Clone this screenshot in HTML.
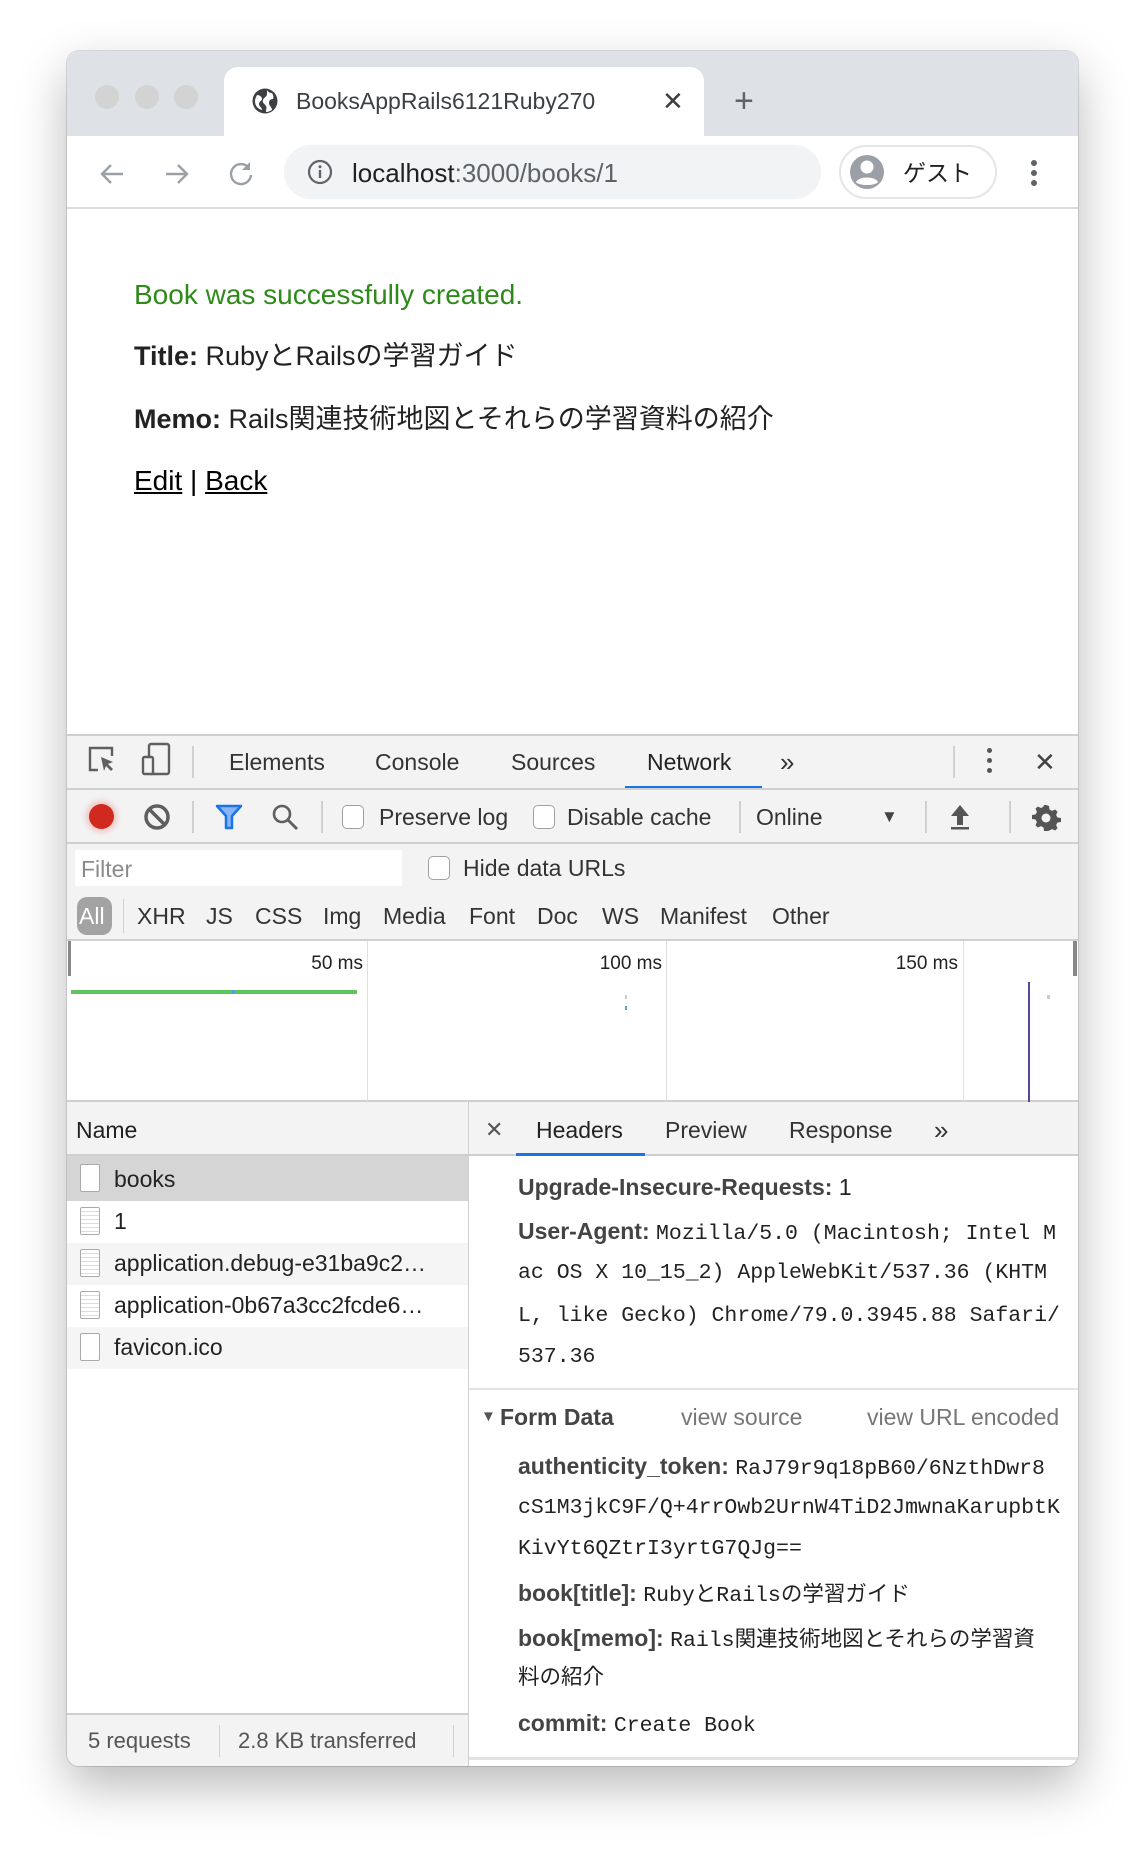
<!DOCTYPE html>
<html><head><meta charset="utf-8">
<style>
*{margin:0;padding:0;box-sizing:border-box}
body{width:1146px;height:1850px;background:#fff;position:relative;overflow:hidden;font-family:"Liberation Sans","Noto Sans CJK JP",sans-serif;color:#333}
.a{position:absolute;white-space:nowrap}
.win{position:absolute;left:67px;top:51px;width:1011px;height:1715px;border-radius:12px;background:#fff;box-shadow:0 20px 50px rgba(0,0,0,.28),0 0 0 1px rgba(0,0,0,.12);overflow:hidden}
.t{position:absolute;white-space:nowrap;line-height:30px;transform:translateY(-15px)}
.dt{font-size:23px;color:#333}
.mono{font-family:"Liberation Mono","Noto Sans CJK JP",monospace;font-size:21.5px;color:#222}
.b{font-weight:bold;color:#444}
.sep{position:absolute;width:2px;background:#d0d0d0}
.cb{position:absolute;width:22px;height:24px;border:1.5px solid #a0a0a0;border-radius:5px;background:#fff}
</style></head><body>
<div class="win">
  <div class="a" style="left:0;top:0;width:1011px;height:85px;background:#dee1e6"></div>
  <div class="a" style="left:28px;top:34px;width:24px;height:24px;border-radius:50%;background:#d3d3d3"></div>
  <div class="a" style="left:68px;top:34px;width:24px;height:24px;border-radius:50%;background:#d3d3d3"></div>
  <div class="a" style="left:107px;top:34px;width:24px;height:24px;border-radius:50%;background:#d3d3d3"></div>
  <div class="a" style="left:157px;top:16px;width:480px;height:70px;background:#fff;border-radius:14px 14px 0 0"></div>
  <svg class="a" style="left:184px;top:36px" width="28" height="28" viewBox="0 0 28 28"><circle cx="14" cy="14" r="12.5" fill="#3c4043"/><path d="M6 8c3 0 5 2 5 4s-3 2-3 5 3 3 3 6c-4-1-7-4-7-9 0-2 1-4 2-6zM16 3c1 2 3 3 5 3 1 2 2 4 1 6-2 0-4 1-4 4s3 4 3 7c-2 1-4 2-6 2 0-3 1-4 0-6s-4-3-3-6 4-3 4-6z" fill="#fff"/></svg>
  <div class="t" style="left:229px;top:50px;font-size:23px;color:#3c4043">BooksAppRails6121Ruby270</div>
  <div class="t" style="left:595px;top:50px;font-size:26px;color:#3c4043">✕</div>
  <div class="t" style="left:667px;top:50px;font-size:34px;color:#5f6368">+</div>
  <div class="a" style="left:0;top:156px;width:1011px;height:2px;background:#dadce0"></div>
  <svg class="a" style="left:30px;top:108px" width="30" height="30" viewBox="0 0 30 30"><path d="M26 15H5M14 6l-9 9 9 9" stroke="#9aa0a6" stroke-width="2.4" fill="none"/></svg>
  <svg class="a" style="left:95px;top:108px" width="30" height="30" viewBox="0 0 30 30"><path d="M4 15h21M16 6l9 9-9 9" stroke="#9aa0a6" stroke-width="2.4" fill="none"/></svg>
  <svg class="a" style="left:159px;top:107px" width="30" height="30" viewBox="0 0 30 30"><path d="M23 10A10 10 0 1 0 25 17" stroke="#9aa0a6" stroke-width="2.4" fill="none"/><path d="M24 4v8h-8z" fill="#9aa0a6"/></svg>
  <div class="a" style="left:217px;top:94px;width:537px;height:54px;border-radius:27px;background:#f1f3f4"></div>
  <svg class="a" style="left:240px;top:108px" width="26" height="26" viewBox="0 0 26 26"><circle cx="13" cy="13" r="11" stroke="#5f6368" stroke-width="2.2" fill="none"/><rect x="11.8" y="11" width="2.4" height="8" fill="#5f6368"/><circle cx="13" cy="7.8" r="1.5" fill="#5f6368"/></svg>
  <div class="t" style="left:285px;top:122px;font-size:26px;color:#202124">localhost<span style="color:#5f6368">:3000/books/1</span></div>
  <div class="a" style="left:772px;top:94px;width:158px;height:54px;border-radius:27px;border:2px solid #e3e5e8;background:#fff"></div>
  <svg class="a" style="left:782px;top:103px" width="36" height="36" viewBox="0 0 36 36"><circle cx="18" cy="18" r="17" fill="#9aa0a6"/><circle cx="18" cy="13" r="6.5" fill="#fff"/><path d="M7 28c3-6 19-6 22 0-3 4-19 4-22 0z" fill="#fff"/></svg>
  <div class="t" style="left:836px;top:122px;font-size:23px;color:#202124">ゲスト</div>
  <div class="a" style="left:964px;top:109px;width:6px;height:6px;border-radius:50%;background:#5f6368;box-shadow:0 10px 0 #5f6368,0 20px 0 #5f6368"></div>

  <div class="t" style="left:67px;top:244px;font-size:28px;color:#2e8a1a">Book was successfully created.</div>
  <div class="t" style="left:67px;top:305px;font-size:27px;color:#222"><b>Title:</b> RubyとRailsの学習ガイド</div>
  <div class="t" style="left:67px;top:368px;font-size:27px;color:#222"><b>Memo:</b> Rails関連技術地図とそれらの学習資料の紹介</div>
  <div class="t" style="left:67px;top:430px;font-size:28px;color:#000"><u>Edit</u>&nbsp;|&nbsp;<u>Back</u></div>

  <div class="a" style="left:0;top:683px;width:1011px;height:1032px;background:#f3f3f3;border-top:2px solid #cfcfcf"></div>
  <svg class="a" style="left:20px;top:694px" width="30" height="30" viewBox="0 0 30 30"><path d="M11 25H3V3h22v8" stroke="#5f5f5f" stroke-width="2.4" fill="none"/><path d="M14 12l12 5-5 2 5 5-2 2-5-5-2 5z" fill="#5f5f5f"/></svg>
  <svg class="a" style="left:73px;top:691px" width="32" height="34" viewBox="0 0 32 34"><rect x="9" y="2" width="20" height="30" rx="2" stroke="#5f5f5f" stroke-width="2.4" fill="none"/><rect x="3" y="15" width="10" height="17" rx="1.5" stroke="#5f5f5f" stroke-width="2.4" fill="#f3f3f3"/></svg>
  <div class="sep" style="left:125px;top:695px;height:32px"></div>
  <div class="t dt" style="left:162px;top:711px">Elements</div>
  <div class="t dt" style="left:308px;top:711px">Console</div>
  <div class="t dt" style="left:444px;top:711px">Sources</div>
  <div class="t dt" style="left:580px;top:711px;color:#222">Network</div>
  <div class="a" style="left:558px;top:735px;width:137px;height:3px;background:#1a73e8"></div>
  <div class="t dt" style="left:713px;top:711px;font-size:26px">»</div>
  <div class="sep" style="left:886px;top:695px;height:32px"></div>
  <div class="a" style="left:920px;top:697px;width:5px;height:5px;border-radius:50%;background:#555;box-shadow:0 10px 0 #555,0 20px 0 #555"></div>
  <div class="t" style="left:967px;top:711px;font-size:26px;color:#444">✕</div>
  <div class="a" style="left:0;top:737px;width:1011px;height:2px;background:#d0d0d0"></div>
  <div class="a" style="left:22px;top:753px;width:25px;height:25px;border-radius:50%;background:#d0291d;box-shadow:0 0 6px 3px rgba(220,60,50,.25)"></div>
  <svg class="a" style="left:76px;top:752px" width="28" height="28" viewBox="0 0 28 28"><circle cx="14" cy="14" r="11" stroke="#5f5f5f" stroke-width="3.5" fill="none"/><path d="M7 7l14 14" stroke="#5f5f5f" stroke-width="3.5"/></svg>
  <div class="sep" style="left:125px;top:750px;height:32px"></div>
  <svg class="a" style="left:148px;top:753px" width="28" height="26" viewBox="0 0 28 26"><path d="M2 2h24l-9 10v12h-6V12z" fill="#8ab4f8" stroke="#1a73e8" stroke-width="2.5" stroke-linejoin="round"/></svg>
  <svg class="a" style="left:203px;top:751px" width="30" height="30" viewBox="0 0 30 30"><circle cx="12" cy="12" r="8" stroke="#5f5f5f" stroke-width="2.6" fill="none"/><path d="M18 18l9 9" stroke="#5f5f5f" stroke-width="2.8"/></svg>
  <div class="sep" style="left:254px;top:750px;height:32px"></div>
  <div class="cb" style="left:275px;top:754px"></div>
  <div class="t dt" style="left:312px;top:766px">Preserve log</div>
  <div class="cb" style="left:466px;top:754px"></div>
  <div class="t dt" style="left:500px;top:766px">Disable cache</div>
  <div class="sep" style="left:672px;top:750px;height:32px"></div>
  <div class="t dt" style="left:689px;top:766px">Online</div>
  <div class="t" style="left:814px;top:766px;font-size:17px;color:#444">▼</div>
  <div class="sep" style="left:858px;top:750px;height:32px"></div>
  <svg class="a" style="left:881px;top:752px" width="24" height="28" viewBox="0 0 24 28"><path d="M12 2L3 13h6v9h6v-9h6z" fill="#555"/><rect x="3" y="24" width="18" height="2.5" fill="#555"/></svg>
  <div class="sep" style="left:942px;top:750px;height:32px"></div>
  <svg class="a" style="left:964px;top:752px" width="30" height="30" viewBox="0 0 30 30"><path d="M15 2l3 1 .5 3.5 2.5 1.4 3.3-1.4 2.2 2.2-1.4 3.3 1.4 2.5 3.5.5v4l-3.5.5-1.4 2.5 1.4 3.3-2.2 2.2-3.3-1.4-2.5 1.4L17 28h-4l-.5-3.5-2.5-1.4-3.3 1.4-2.2-2.2 1.4-3.3L4.5 16.5 1 16v-4l3.5-.5L6 9 4.5 5.7 6.7 3.5 10 5l2.5-1.4L13 2z" fill="#555"/><circle cx="15" cy="15" r="4.5" fill="#f3f3f3"/></svg>
  <div class="a" style="left:0;top:791px;width:1011px;height:2px;background:#d0d0d0"></div>
  <div class="a" style="left:8px;top:799px;width:327px;height:36px;background:#fff"></div>
  <div class="t dt" style="left:14px;top:818px;color:#8a8a8a">Filter</div>
  <div class="cb" style="left:361px;top:805px"></div>
  <div class="t dt" style="left:396px;top:817px">Hide data URLs</div>
  <div class="a" style="left:10px;top:846px;width:35px;height:38px;border-radius:10px;background:#a3a3a3"></div>
  <div class="t dt" style="left:12px;top:865px;color:#fff">All</div>
  <div class="sep" style="left:56px;top:848px;height:34px;width:1px"></div>
  <div class="t dt" style="left:70px;top:865px">XHR</div>
  <div class="t dt" style="left:139px;top:865px">JS</div>
  <div class="t dt" style="left:188px;top:865px">CSS</div>
  <div class="t dt" style="left:256px;top:865px">Img</div>
  <div class="t dt" style="left:316px;top:865px">Media</div>
  <div class="t dt" style="left:402px;top:865px">Font</div>
  <div class="t dt" style="left:470px;top:865px">Doc</div>
  <div class="t dt" style="left:535px;top:865px">WS</div>
  <div class="t dt" style="left:593px;top:865px">Manifest</div>
  <div class="t dt" style="left:705px;top:865px">Other</div>
  <div class="a" style="left:0;top:888px;width:1011px;height:163px;background:#fff;border-top:2px solid #d0d0d0;border-bottom:2px solid #cfcfcf"></div>
  <div class="a" style="left:300px;top:890px;width:1px;height:160px;background:#e0e0e0"></div>
  <div class="a" style="left:599px;top:890px;width:1px;height:160px;background:#e0e0e0"></div>
  <div class="a" style="left:896px;top:890px;width:1px;height:160px;background:#e0e0e0"></div>
  <div class="a" style="left:1px;top:890px;width:3px;height:35px;background:#888"></div>
  <div class="a" style="left:1006px;top:890px;width:4px;height:35px;background:#888"></div>
  <div class="t" style="left:226px;top:913px;width:70px;text-align:right;font-size:19px;color:#222">50 ms</div>
  <div class="t" style="left:515px;top:913px;width:80px;text-align:right;font-size:19px;color:#222">100 ms</div>
  <div class="t" style="left:811px;top:913px;width:80px;text-align:right;font-size:19px;color:#222">150 ms</div>
  <div class="a" style="left:4px;top:939px;width:286px;height:4px;background:#5ec45e"></div>
  <div class="a" style="left:165px;top:939px;width:3px;height:4px;background:#4aa3df"></div>
  <div class="a" style="left:558px;top:944px;width:2px;height:4px;background:#ccc"></div>
  <div class="a" style="left:558px;top:955px;width:2px;height:4px;background:#4aa3df"></div>
  <div class="a" style="left:961px;top:931px;width:2px;height:120px;background:linear-gradient(90deg,#3e4bb5,#b03030)"></div>
  <div class="a" style="left:980px;top:944px;width:3px;height:4px;background:#ccc"></div>
  <div class="a" style="left:401px;top:1051px;width:1px;height:664px;background:#d0d0d0"></div>
  <div class="a" style="left:0;top:1103px;width:1011px;height:2px;background:#cfcfcf"></div>
  <div class="t dt" style="left:9px;top:1079px;color:#222">Name</div>
  <div class="t" style="left:418px;top:1079px;font-size:22px;color:#555">✕</div>
  <div class="t dt" style="left:469px;top:1079px;color:#222">Headers</div>
  <div class="a" style="left:449px;top:1102px;width:129px;height:3px;background:#1a73e8"></div>
  <div class="t dt" style="left:598px;top:1079px">Preview</div>
  <div class="t dt" style="left:722px;top:1079px">Response</div>
  <div class="t dt" style="left:867px;top:1079px;font-size:26px">»</div>
  <div class="a" style="left:0;top:1105px;width:401px;height:557px;background:#fff"></div>
  <div class="a" style="left:0;top:1105px;width:401px;height:45px;background:#d5d5d5"></div>
  <div class="a" style="left:0;top:1192px;width:401px;height:42px;background:#f5f5f5"></div>
  <div class="a" style="left:0;top:1276px;width:401px;height:42px;background:#f5f5f5"></div>
  <div class="a" style="left:13px;top:1113px;width:20px;height:28px;background:#fff;border:1.5px solid #aaa;border-radius:2px"></div>
  <div class="a" style="left:13px;top:1156px;width:20px;height:28px;background:repeating-linear-gradient(#fff 0 3px,#ddd 3px 4px);border:1.5px solid #aaa;border-radius:2px"></div>
  <div class="a" style="left:13px;top:1198px;width:20px;height:28px;background:repeating-linear-gradient(#fff 0 3px,#ddd 3px 4px);border:1.5px solid #aaa;border-radius:2px"></div>
  <div class="a" style="left:13px;top:1240px;width:20px;height:28px;background:repeating-linear-gradient(#fff 0 3px,#ddd 3px 4px);border:1.5px solid #aaa;border-radius:2px"></div>
  <div class="a" style="left:13px;top:1282px;width:20px;height:28px;background:#fff;border:1.5px solid #aaa;border-radius:2px"></div>
  <div class="t dt" style="left:47px;top:1128px;color:#222">books</div>
  <div class="t dt" style="left:47px;top:1170px;color:#222">1</div>
  <div class="t dt" style="left:47px;top:1212px;color:#222">application.debug-e31ba9c2…</div>
  <div class="t dt" style="left:47px;top:1254px;color:#222">application-0b67a3cc2fcde6…</div>
  <div class="t dt" style="left:47px;top:1296px;color:#222">favicon.ico</div>
  <div class="a" style="left:0;top:1662px;width:401px;height:2px;background:#cfcfcf"></div>
  <div class="t" style="left:21px;top:1690px;font-size:22px;color:#555">5 requests</div>
  <div class="sep" style="left:152px;top:1674px;height:32px;width:1px"></div>
  <div class="t" style="left:171px;top:1690px;font-size:22px;color:#555">2.8 KB transferred</div>
  <div class="sep" style="left:386px;top:1674px;height:32px;width:1px"></div>
  <div class="a" style="left:402px;top:1105px;width:609px;height:610px;background:#fff;overflow:hidden">
    <div class="t" style="left:49px;top:31px;font-size:23px"><span class="b">Upgrade-Insecure-Requests:</span> <span style="color:#222">1</span></div>
    <div class="t" style="left:49px;top:75px;font-size:23px"><span class="b">User-Agent:</span> <span class="mono">Mozilla/5.0 (Macintosh; Intel M</span></div>
    <div class="t mono" style="left:49px;top:117px">ac OS X 10_15_2) AppleWebKit/537.36 (KHTM</div>
    <div class="t mono" style="left:49px;top:160px">L, like Gecko) Chrome/79.0.3945.88 Safari/</div>
    <div class="t mono" style="left:49px;top:201px">537.36</div>
    <div class="a" style="left:0;top:232px;width:609px;height:2px;background:#e3e3e3"></div>
    <div class="t" style="left:12px;top:261px;font-size:15px;color:#555">▼</div>
    <div class="t b" style="left:31px;top:261px;font-size:23px">Form Data</div>
    <div class="t" style="left:212px;top:261px;font-size:23px;color:#777">view source</div>
    <div class="t" style="left:398px;top:261px;font-size:23px;color:#777">view URL encoded</div>
    <div class="t" style="left:49px;top:310px;font-size:23px"><span class="b">authenticity_token:</span> <span class="mono">RaJ79r9q18pB60/6NzthDwr8</span></div>
    <div class="t mono" style="left:49px;top:352px">cS1M3jkC9F/Q+4rrOwb2UrnW4TiD2JmwnaKarupbtK</div>
    <div class="t mono" style="left:49px;top:393px">KivYt6QZtrI3yrtG7QJg==</div>
    <div class="t" style="left:49px;top:437px;font-size:23px"><span class="b">book[title]:</span> <span class="mono">RubyとRailsの学習ガイド</span></div>
    <div class="t" style="left:49px;top:482px;font-size:23px"><span class="b">book[memo]:</span> <span class="mono">Rails関連技術地図とそれらの学習資</span></div>
    <div class="t mono" style="left:49px;top:523px">料の紹介</div>
    <div class="t" style="left:49px;top:567px;font-size:23px"><span class="b">commit:</span> <span class="mono">Create Book</span></div>
    <div class="a" style="left:0;top:601px;width:609px;height:3px;background:#e3e3e3"></div>
  </div>
</div>
</body></html>
